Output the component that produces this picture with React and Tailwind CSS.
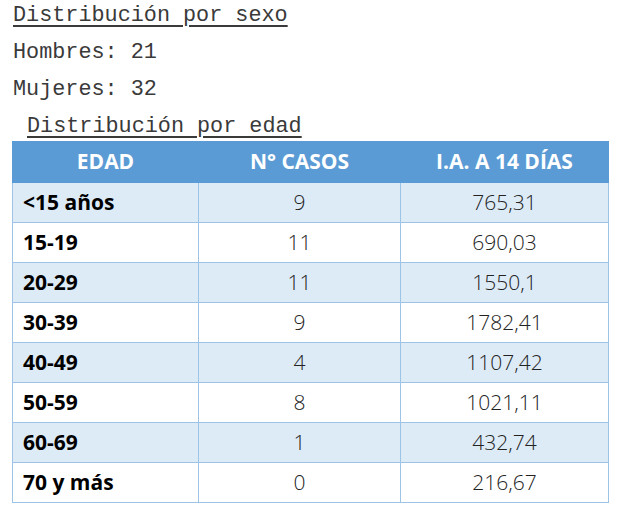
export default function App() {
  const rows = [
    ["<15 años", "9", "765,31"],
    ["15-19", "11", "690,03"],
    ["20-29", "11", "1550,1"],
    ["30-39", "9", "1782,41"],
    ["40-49", "4", "1107,42"],
    ["50-59", "8", "1021,11"],
    ["60-69", "1", "432,74"],
    ["70 y más", "0", "216,67"],
  ];
  const mono = { fontFamily: '"Liberation Mono", monospace' };
  return (
    <div className="w-[634px] h-[528px] bg-white text-[#3a3a3a]">
      <div className="pt-[2px] pl-[13px] flex flex-col">
        <div className="h-[37px] text-[21.8px] leading-[28px] underline underline-offset-[4px] decoration-[1.5px]" style={mono}>Distribución por sexo</div>
        <div className="h-[37px] text-[21.8px] leading-[28px]" style={mono}>Hombres: 21</div>
        <div className="h-[37px] text-[21.8px] leading-[28px]" style={mono}>Mujeres: 32</div>
        <div className="h-[37px] pl-[14px] text-[21.8px] leading-[28px] underline underline-offset-[4px] decoration-[1.5px]" style={mono}>Distribución por edad</div>
      </div>
      <table className="ml-[12px] mt-[-9px] border-collapse" style={{ fontFamily: '"Open Sans", sans-serif' }}>
        <thead>
          <tr className="bg-[#5b9bd5] text-white h-[41px]">
            <th className="w-[186px] text-[21px] font-bold text-center p-0 border border-[#5b9bd5]">EDAD</th>
            <th className="w-[202px] text-[21px] font-bold text-center p-0 border border-[#5b9bd5]">N° CASOS</th>
            <th className="w-[208px] text-[21px] font-bold text-center p-0 border border-[#5b9bd5]">I.A. A 14 DÍAS</th>
          </tr>
        </thead>
        <tbody>
          {rows.map((r, i) => (
            <tr key={i} className={(i % 2 === 0 ? "bg-[#ddebf7]" : "bg-white") + " h-[40px]"}>
              <td className="border border-[#9dc3e6] pl-[10px] text-[21px] font-bold text-black p-0">{r[0]}</td>
              <td className="border border-[#9dc3e6] text-center text-[21px] font-light text-[#222] p-0">{r[1]}</td>
              <td className="border border-[#9dc3e6] text-center text-[21px] font-light text-[#222] p-0">{r[2]}</td>
            </tr>
          ))}
        </tbody>
      </table>
    </div>
  );
}
